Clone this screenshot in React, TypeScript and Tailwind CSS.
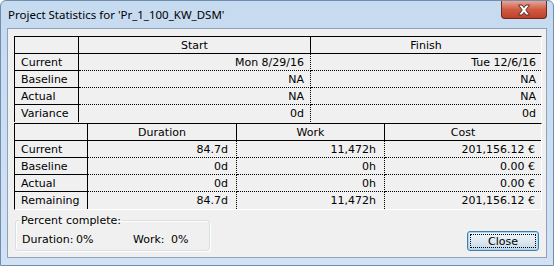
import type { ReactNode } from "react";

const stats1 = [
  { label: "Current", start: "Mon 8/29/16", finish: "Tue 12/6/16" },
  { label: "Baseline", start: "NA", finish: "NA" },
  { label: "Actual", start: "NA", finish: "NA" },
  { label: "Variance", start: "0d", finish: "0d" },
];

const stats2 = [
  { label: "Current", duration: "84.7d", work: "11,472h", cost: "201,156.12 €" },
  { label: "Baseline", duration: "0d", work: "0h", cost: "0.00 €" },
  { label: "Actual", duration: "0d", work: "0h", cost: "0.00 €" },
  { label: "Remaining", duration: "84.7d", work: "11,472h", cost: "201,156.12 €" },
];

function Head({ children, last }: { children?: ReactNode; last?: boolean }) {
  return (
    <div
      className={
        "flex h-[17px] items-center justify-center border-b border-black " +
        (last ? "" : "border-r")
      }
    >
      {children}
    </div>
  );
}

function Label({ children, last }: { children: ReactNode; last?: boolean }) {
  return (
    <div
      className={
        "flex h-[17px] items-center border-r border-black pl-[6px] " +
        (last ? "" : "border-b")
      }
    >
      {children}
    </div>
  );
}

function Value({
  children,
  last,
  sep,
  pr = "pr-[6px]",
}: {
  children: ReactNode;
  last?: boolean;
  sep?: boolean;
  pr?: string;
}) {
  return (
    <div
      className={
        "flex h-[17px] items-center justify-end border-dotted border-black " +
        pr +
        (last ? "" : " border-b") +
        (sep ? " border-r" : "")
      }
    >
      {children}
    </div>
  );
}

function CloseX() {
  return (
    <svg width="14" height="12" viewBox="0 0 14 12">
      <path
        d="M1.5 1 H5 L7 3.6 L9 1 H12.5 L8.8 6 L12.5 11 H9 L7 8.4 L5 11 H1.5 L5.2 6 Z"
        fill="#fff"
        stroke="#5a2a22"
        strokeWidth="1"
        strokeLinejoin="round"
      />
    </svg>
  );
}

export default function App() {
  return (
    <div className="flex h-[266px] w-[554px] flex-col overflow-hidden rounded-t-[6px] border border-[#6f8db0] bg-gradient-to-b from-[#c6daf0] to-[#d2e2f4] font-['DejaVu_Sans',sans-serif] text-[11px] leading-none text-black">
      <div className="flex h-[27px] items-start">
        <div className="pl-[7px] pt-[7px] font-['Noto_Sans',sans-serif] text-[11.5px] leading-[14px] text-black">
          Project Statistics for 'Pr_1_100_KW_DSM'
        </div>
        <div className="ml-auto mr-[6px] flex h-[18px] w-[46px] items-center justify-center rounded-b-[4px] border border-t-0 border-[#6b2a20] bg-gradient-to-b from-[#e7a493] via-[#cf5a43] to-[#c0402a]">
          <CloseX />
        </div>
      </div>

      <div className="mx-[6px] flex h-[230px] flex-col border border-[#8ea2ba] bg-[#f0f0f0] pl-[6px] pr-[5px] pt-[7px]">
        <div className="grid w-[528px] grid-cols-[64px_232px_230px] border-l border-r border-t border-l-black border-r-white border-t-black">
          <Head />
          <Head>Start</Head>
          <Head last>Finish</Head>
          {stats1.map((r, i) => {
            const last = i === stats1.length - 1;
            return [
              <Label key={r.label + "l"} last={last}>
                {r.label}
              </Label>,
              <Value key={r.label + "s"} last={last} sep>
                {r.start}
              </Value>,
              <Value key={r.label + "f"} last={last} pr="pr-[5px]">
                {r.finish}
              </Value>,
            ];
          })}
        </div>

        <div className="mt-[1px] grid w-[528px] grid-cols-[73px_149px_148px_156px] border border-b-white border-l-black border-r-white border-t-black">
          <Head />
          <Head>Duration</Head>
          <Head>Work</Head>
          <Head last>Cost</Head>
          {stats2.map((r, i) => {
            const last = i === stats2.length - 1;
            return [
              <Label key={r.label + "l"} last={last}>
                {r.label}
              </Label>,
              <Value key={r.label + "d"} last={last} sep pr="pr-[8px]">
                {r.duration}
              </Value>,
              <Value key={r.label + "w"} last={last} sep pr="pr-[8px]">
                {r.work}
              </Value>,
              <Value key={r.label + "c"} last={last} pr="pr-[6px]">
                {r.cost}
              </Value>,
            ];
          })}
        </div>

        <div className="mt-[4px] flex w-[526px] items-end">
          <fieldset className="ml-[1px] h-[37px] w-[195px] rounded-[3px] border border-[#d5dfe5] shadow-[inset_1px_1px_0_#fff,1px_1px_0_#fff]">
            <legend className="ml-[4px] px-[1px] leading-[13px]">Percent complete:</legend>
            <div className="flex pl-[6px] pt-[7px]">
              <span className="w-[54px]">Duration:</span>
              <span className="w-[57px]">0%</span>
              <span className="w-[38px]">Work:</span>
              <span>0%</span>
            </div>
          </fieldset>
          <button className="ml-auto mr-[1px] flex h-[20px] w-[72px] items-center justify-center rounded-[3px] border border-[#3c7fb1] bg-gradient-to-b from-[#eef6fc] via-[#dfe9f1] to-[#c3d7e6] p-[2px] shadow-[inset_0_0_0_1px_#a8d6f2]">
            <span className="flex h-full w-full items-center justify-center border border-dotted border-black">
              Close
            </span>
          </button>
        </div>
      </div>
    </div>
  );
}
